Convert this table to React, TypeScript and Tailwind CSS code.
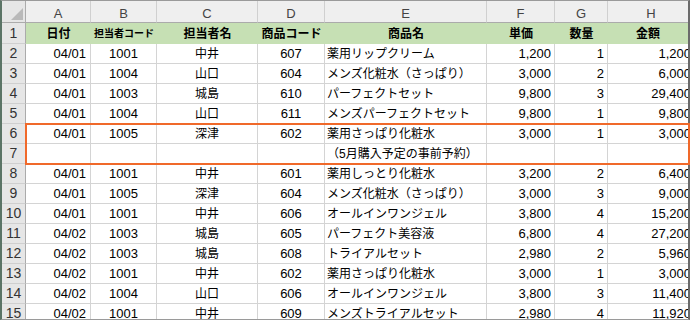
import React from "react";

type Row = {
  n: number;
  date: string;
  staff: string;
  name: string;
  code: string;
  product: string;
  price: string;
  qty: string;
  total: string;
};

const rows: Row[] = [
  { n: 2, date: "04/01", staff: "1001", name: "中井", code: "607", product: "薬用リップクリーム", price: "1,200", qty: "1", total: "1,200" },
  { n: 3, date: "04/01", staff: "1004", name: "山口", code: "604", product: "メンズ化粧水（さっぱり）", price: "3,000", qty: "2", total: "6,000" },
  { n: 4, date: "04/01", staff: "1003", name: "城島", code: "610", product: "パーフェクトセット", price: "9,800", qty: "3", total: "29,400" },
  { n: 5, date: "04/01", staff: "1004", name: "山口", code: "611", product: "メンズパーフェクトセット", price: "9,800", qty: "1", total: "9,800" },
  { n: 6, date: "04/01", staff: "1005", name: "深津", code: "602", product: "薬用さっぱり化粧水", price: "3,000", qty: "1", total: "3,000" },
  { n: 7, date: "", staff: "", name: "", code: "", product: "（5月購入予定の事前予約）", price: "", qty: "", total: "" },
  { n: 8, date: "04/01", staff: "1001", name: "中井", code: "601", product: "薬用しっとり化粧水", price: "3,200", qty: "2", total: "6,400" },
  { n: 9, date: "04/01", staff: "1005", name: "深津", code: "604", product: "メンズ化粧水（さっぱり）", price: "3,000", qty: "3", total: "9,000" },
  { n: 10, date: "04/01", staff: "1001", name: "中井", code: "606", product: "オールインワンジェル", price: "3,800", qty: "4", total: "15,200" },
  { n: 11, date: "04/02", staff: "1003", name: "城島", code: "605", product: "パーフェクト美容液", price: "6,800", qty: "4", total: "27,200" },
  { n: 12, date: "04/02", staff: "1003", name: "城島", code: "608", product: "トライアルセット", price: "2,980", qty: "2", total: "5,960" },
  { n: 13, date: "04/02", staff: "1001", name: "中井", code: "602", product: "薬用さっぱり化粧水", price: "3,000", qty: "1", total: "3,000" },
  { n: 14, date: "04/02", staff: "1004", name: "山口", code: "606", product: "オールインワンジェル", price: "3,800", qty: "3", total: "11,400" },
  { n: 15, date: "04/02", staff: "1001", name: "中井", code: "609", product: "メンズトライアルセット", price: "2,980", qty: "4", total: "11,920" },
];

const widths = ["w-[65px]", "w-[66px]", "w-[101px]", "w-[67px]", "w-[162px]", "w-[68px]", "w-[53px]", "w-[87px]"];
const letters = ["A", "B", "C", "D", "E", "F", "G", "H"];
const headers = ["日付", "担当者コード", "担当者名", "商品コード", "商品名", "単価", "数量", "金額"];

const cell = "shrink-0 flex items-center whitespace-nowrap border-r border-b border-[#d4d4d4] bg-white";

function RowHead({ n, h }: { n: number; h: string }) {
  return (
    <div className={`${h} w-[24px] shrink-0 flex items-center justify-center bg-[#e6e6e6] border-r border-r-[#ababab] border-b border-b-[#cfcfcf] text-[14px] text-[#333]`}>
      {n}
    </div>
  );
}

export default function App() {
  return (
    <div className="relative w-[690px] h-[320px] border-l-2 border-r-2 border-t border-b border-l-[#5b7466] border-r-[#6b6b6b] border-t-[#9a9a9a] border-b-[#9a9a9a] bg-white font-[family-name:'Liberation_Sans','Noto_Sans_CJK_JP',sans-serif] text-black">
      <div className="h-full w-full overflow-hidden">
        {/* column letters */}
        <div className="flex h-[22px]">
          <div className="w-[24px] shrink-0 flex items-end justify-end bg-[#e6e6e6] border-r border-b border-[#ababab] p-[2px]">
            <svg width="12" height="12" viewBox="0 0 12 12">
              <polygon points="12,0 12,12 0,12" fill="#b9b9b9" />
            </svg>
          </div>
          {letters.map((l, i) => (
            <div
              key={l}
              className={`${widths[i]} shrink-0 flex items-center justify-center pt-[4px] bg-[#efefef] border-r border-r-[#d0d0d0] border-b border-b-[#ababab] text-[13px] text-[#444]`}
            >
              {l}
            </div>
          ))}
        </div>

        {/* header row */}
        <div className="flex h-[21px]">
          <RowHead n={1} h="h-[21px]" />
          {headers.map((t, i) => (
            <div
              key={t}
              className={`${widths[i]} shrink-0 flex items-center justify-center bg-[#c6e0b4] font-bold ${i === 1 ? "text-[10px]" : "text-[12px]"} ${i === 7 ? "pr-[7px]" : ""}`}
            >
              {t}
            </div>
          ))}
        </div>

        {rows.map((r) => (
          <div key={r.n} className="flex h-[20px]">
            <RowHead n={r.n} h="h-[20px]" />
            <div className={`${cell} ${widths[0]} justify-end pr-[4px] text-[13px]`}>{r.date}</div>
            <div className={`${cell} ${widths[1]} justify-center text-[13px]`}>{r.staff}</div>
            <div className={`${cell} ${widths[2]} justify-center text-[12px]`}>{r.name}</div>
            <div className={`${cell} ${widths[3]} justify-center text-[13px]`}>{r.code}</div>
            <div className={`${cell} ${widths[4]} justify-start pl-[2px] text-[12px]`}>{r.product}</div>
            <div className={`${cell} ${widths[5]} justify-end pr-[3px] text-[13px]`}>{r.price}</div>
            <div className={`${cell} ${widths[6]} justify-end pr-[3px] text-[13px]`}>{r.qty}</div>
            <div className={`${cell} ${widths[7]} justify-end pr-[3px] text-[13px]`}>{r.total}</div>
          </div>
        ))}
      </div>

      {/* selection outline around rows 6-7 */}
      <div className="absolute left-[23px] top-[122px] w-[665px] h-[42px] border-2 border-[#f0692a] pointer-events-none" />
    </div>
  );
}
